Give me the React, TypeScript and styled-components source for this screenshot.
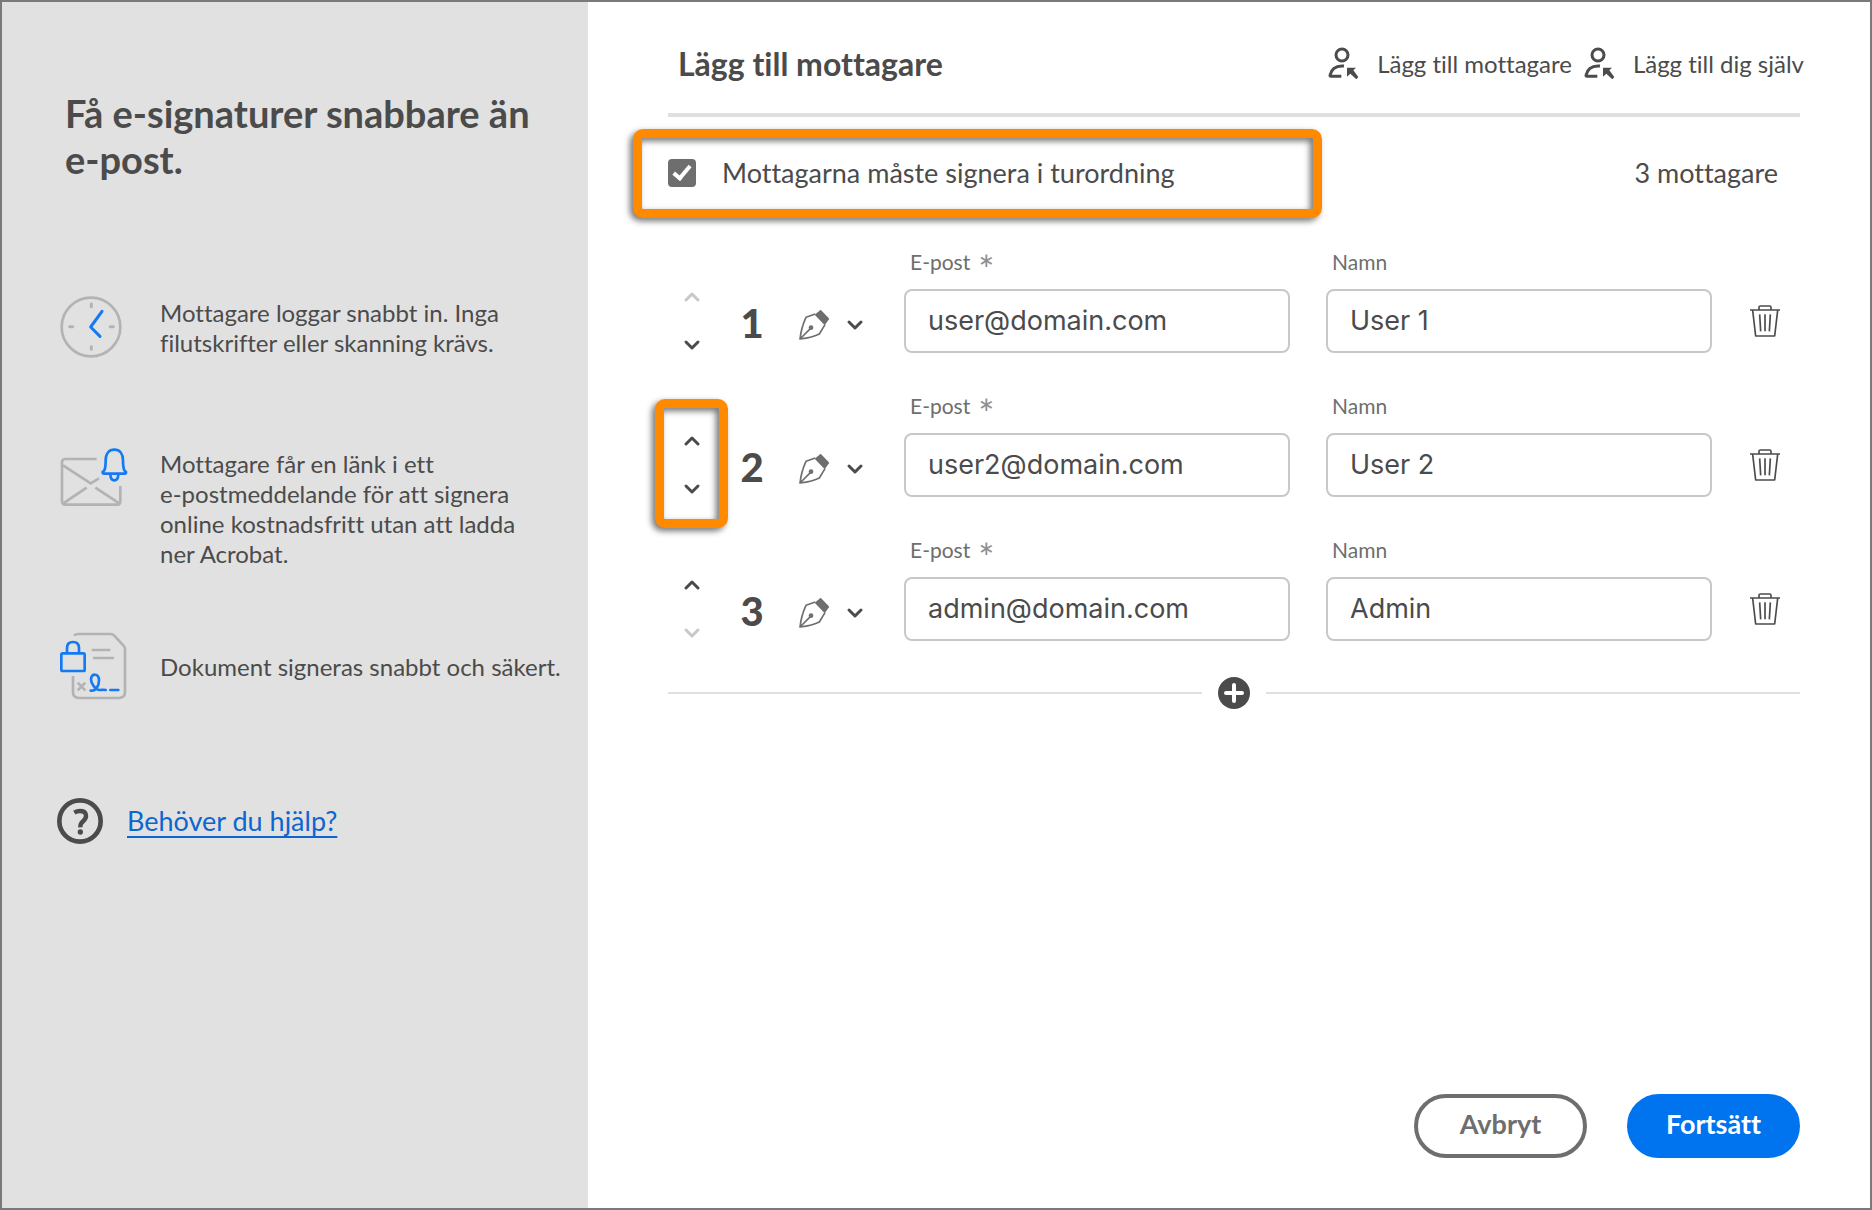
import React, { useState } from "react";
import styled, { createGlobalStyle, css } from "styled-components";

const color = {
  ink: "#4b4b4b",
  label: "#6e6e6e",
  line: "#e0e0e0",
  panel: "#e1e1e1",
  field: "#c8c8c8",
  blue: "#0073ef",
  link: "#0d66d0",
  icon: "#b3b3b3",
  accent: "#147af3",
  callout: "#ff8a00",
};

const GlobalStyle = createGlobalStyle`
  *, *::before, *::after { box-sizing: border-box; }
  body {
    margin: 0;
    background: #fff;
    color: ${color.ink};
    font-family: Lato, "Open Sans", sans-serif;
    font-size: 24px;
    line-height: 30px;
    font-variant-ligatures: none;
  }
  button, input { font: inherit; color: inherit; font-variant-ligatures: none; }
  svg { display: block; flex: none; }
`;

const Page = styled.div`
  display: grid;
  grid-template-columns: 586px 1fr;
  min-height: 100vh;
  border: 2px solid #7b7a7a;
`;

const Sidebar = styled.aside`
  background: ${color.panel};
  padding: 88px 24px 48px 55px;
`;

const Promo = styled.h1`
  margin: 0 0 114px;
  padding-left: 8px;
  font-size: 38px;
  line-height: 46px;
  font-weight: 700;
`;

const Features = styled.ul`
  list-style: none;
  margin: 0;
  padding: 0 0 0 3px;
  display: flex;
  flex-direction: column;
  gap: 63px;
`;

const Feature = styled.li<{ $align: "start" | "center"; $minHeight: number }>`
  display: grid;
  grid-template-columns: 100px 1fr;
  align-items: ${(p) => p.$align};
  min-height: ${(p) => p.$minHeight}px;
  p { margin: 0; padding-top: 2px; white-space: pre-line; }
`;

const Help = styled.div`
  display: flex;
  align-items: center;
  gap: 24px;
  margin-top: 98px;
`;

const HelpLink = styled.a`
  color: ${color.link};
  font-size: 27px;
  text-decoration-thickness: 2px;
  text-underline-offset: 5px;
`;

const Main = styled.main`
  display: flex;
  flex-direction: column;
  padding: 0 70px 50px 80px;
`;

const Header = styled.header`
  display: flex;
  align-items: center;
  justify-content: space-between;
  height: 115px;
  padding: 12px 0 0 10px;
  border-bottom: 4px solid ${color.line};
`;

const Title = styled.h2`
  margin: 0;
  font-size: 32px;
  line-height: 40px;
  font-weight: 700;
`;

const Actions = styled.div`
  display: flex;
  align-items: center;
  gap: 12px;
  margin-right: -4px;
`;

const Action = styled.button`
  display: flex;
  align-items: center;
  gap: 18px;
  padding: 0;
  border: 0;
  background: none;
  white-space: nowrap;
  cursor: pointer;
`;

const OrderBar = styled.div`
  display: flex;
  align-items: center;
  justify-content: space-between;
  height: 112px;
  margin-bottom: 19px;
  padding-right: 22px;
  font-size: 27px;
`;

const Highlight = styled.div<{ $inset: string }>`
  position: relative;
  &::after {
    content: "";
    position: absolute;
    inset: ${(p) => p.$inset};
    border: 9px solid ${color.callout};
    border-radius: 10px;
    filter: drop-shadow(-3px 3px 3px rgba(0, 0, 0, 0.55));
    pointer-events: none;
  }
`;

const CheckLabel = styled.label`
  display: flex;
  align-items: center;
  gap: 26px;
  width: 620px;
`;

const Check = styled.input`
  appearance: none;
  display: grid;
  place-items: center;
  width: 28px;
  height: 28px;
  margin: 0;
  border: 3px solid ${color.label};
  border-radius: 4px;
  &:checked { background: ${color.label}; }
  &:checked::after {
    content: "";
    width: 10px;
    height: 18px;
    margin-bottom: 4px;
    border: solid #fff;
    border-width: 0 4px 4px 0;
    transform: rotate(40deg);
  }
`;

const Rows = styled.ol`
  list-style: none;
  margin: 0;
  padding: 0;
  display: flex;
  flex-direction: column;
  gap: 39px;
`;

const Row = styled.li`
  display: grid;
  grid-template-columns: 200px 1fr 1fr 34px;
  column-gap: 36px;
  align-items: end;
  padding-right: 18px;
`;

const Lead = styled.div`
  display: grid;
  grid-template-columns: 48px 72px 1fr;
  align-items: center;
  height: 64px;
`;

const arrowsCss = css`
  display: flex;
  flex-direction: column;
  align-items: center;
  justify-content: space-between;
  height: 64px;
`;

const Arrows = styled.div`
  ${arrowsCss}
`;

const MarkedArrows = styled(Highlight)`
  ${arrowsCss}
`;

const IconButton = styled.button`
  display: flex;
  align-items: center;
  justify-content: center;
  gap: 16px;
  padding: 0;
  border: 0;
  background: none;
  color: ${color.ink};
  cursor: pointer;
  &:disabled { color: ${color.field}; cursor: default; }
`;

const ArrowButton = styled(IconButton)`
  width: 32px;
  height: 16px;
`;

const RoleButton = styled(IconButton)`
  justify-content: flex-start;
  padding: 7px 0 0 10px;
`;

const TrashButton = styled(IconButton)`
  height: 64px;
`;

const Position = styled.span`
  padding-top: 4px;
  font-size: 40px;
  line-height: 48px;
  font-weight: 900;
  text-align: center;
`;

const Required = styled.span`
  font-size: 38px;
  line-height: 42px;
  color: #8e8e8e;
`;

const Field = styled.div`
  display: flex;
  flex-direction: column;
  gap: 13px;
  label {
    display: flex;
    align-items: flex-start;
    gap: 8px;
    height: 28px;
    padding-left: 6px;
    font-size: 21px;
    line-height: 28px;
    color: ${color.label};
  }
  input {
    width: 100%;
    height: 64px;
    padding: 0 22px 2px;
    border: 2px solid ${color.field};
    border-radius: 8px;
    background: #fff;
    font-family: Inter, Roboto, sans-serif;
    font-size: 27px;
    line-height: 36px;
  }
`;

const AddLine = styled.div`
  display: flex;
  align-items: center;
  gap: 16px;
  margin-top: 36px;
  &::before, &::after {
    content: "";
    flex: 1;
    height: 2px;
    background: ${color.line};
  }
`;

const Footer = styled.footer`
  display: flex;
  justify-content: flex-end;
  gap: 40px;
  margin-top: auto;
`;

const Pill = styled.button<{ $primary?: boolean }>`
  width: 173px;
  height: 64px;
  padding: 0 0 4px;
  border: 4px solid ${(p) => (p.$primary ? color.blue : color.label)};
  border-radius: 32px;
  background: ${(p) => (p.$primary ? color.blue : "#fff")};
  color: ${(p) => (p.$primary ? "#fff" : color.label)};
  font-size: 27px;
  font-weight: 700;
  cursor: pointer;
`;

const ClockIcon = () => (
  <svg width="62" height="62" viewBox="61 46 186 186" fill="none" strokeLinecap="round" aria-hidden="true">
    <circle cx="154" cy="139" r="88" stroke={color.icon} strokeWidth="8" />
    <path d="M155 70v8M155 198v8M90 138h9M212 138h9" stroke={color.icon} strokeWidth="9" />
    <path d="M187 92l-34 47 28 28" stroke={color.accent} strokeWidth="9" strokeLinejoin="round" />
  </svg>
);

const MailIcon = () => (
  <svg width="68" height="60" viewBox="60 498 204 180" fill="none" strokeWidth="8" strokeLinejoin="round" aria-hidden="true">
    <path
      d="M170 534H76q-10 0-10 10v117q0 10 10 10h156q9 0 9-10v-46M69 553l83 54 25-15M70 667l70-47M166 620l72 47"
      stroke={color.icon}
    />
    <path
      d="M193 568q4-8 4-30c0-20 10-32 26-32s26 12 26 32q0 22 4 30l5 5q1 5-4 5h-62q-5 0-4-5zM211 581q1 17 12 17t12-17"
      stroke={color.accent}
    />
  </svg>
);

const DocumentIcon = () => (
  <svg width="68" height="68" viewBox="57 36 204 204" fill="none" strokeWidth="8" strokeLinejoin="round" aria-hidden="true">
    <path
      d="M99 47q5-5 14-5h96q6 0 10 4l28 30q5 5 5 12v128q0 18-18 18H114q-18 0-18-18v-48M152 90h56M156 114h63"
      stroke={color.icon}
    />
    <path d="M110 188l23 23M133 188l-23 23" stroke={color.icon} />
    <g stroke={color.accent} strokeLinecap="round">
      <rect x="61" y="100" width="70" height="53" rx="4" />
      <path d="M78 99V84q0-18 18-18t18 18v15" />
      <path d="M149 212c16 2 25-15 25-31 0-22-24-22-24-3 0 14 14 32 26 32 8 0 12-2 18 0M208 210h24" />
    </g>
  </svg>
);

const HelpIcon = () => (
  <svg width="46" height="46" viewBox="51 536 138 138" fill="none" stroke={color.ink} aria-hidden="true">
    <circle cx="120" cy="605" r="62" strokeWidth="14" />
    <path d="M103 580q8-5 17-5c22 0 22 20 10 30q-10 8-9 19" strokeWidth="13" />
    <circle cx="121" cy="638" r="8" fill={color.ink} stroke="none" />
  </svg>
);

const PersonIcon = () => (
  <svg width="31" height="34" viewBox="48 48 93 102" fill="none" stroke={color.ink} strokeWidth="9" aria-hidden="true">
    <circle cx="90" cy="72" r="18" />
    <path d="M96 105C72 103 58 114 54 133q0 3 3 3h31" />
    <path d="M105 110h27l-8 8 15 20-6 7-18-17-10 9z" fill={color.ink} stroke="none" />
  </svg>
);

const Chevron = ({ up }: { up?: boolean }) => (
  <svg width="18" height="12" viewBox="0 0 18 12" fill="none" stroke="currentColor" strokeWidth="3" strokeLinecap="round" strokeLinejoin="round" aria-hidden="true">
    <path d={up ? "M3 9l6-6 6 6" : "M3 3l6 6 6-6"} />
  </svg>
);

const PenIcon = () => (
  <svg width="32" height="32" viewBox="444 56 96 96" fill="none" stroke={color.label} strokeWidth="5" strokeLinejoin="round" aria-hidden="true">
    <path d="M496 71l-28 10c-8 17-15 38-18 65 24-3 43-7 58-15l17-28M450 146l31-31" />
    <circle cx="483" cy="112" r="7" fill={color.label} stroke="none" />
    <path d="M512 58l26 27-14 20-30-32z" fill={color.label} stroke="none" />
  </svg>
);

const TrashIcon = () => (
  <svg width="32" height="34" viewBox="1317 822 96 102" fill="none" stroke={color.ink} strokeWidth="5" strokeLinejoin="round" aria-hidden="true">
    <path d="M1320 840h90M1347 839v-7q0-4 4-4h28q4 0 4 4v7M1328 841l9 77h57l9-77" />
    <path d="M1349 853l3 51M1365 853v51M1381 853l-3 51" />
  </svg>
);

const PlusIcon = () => (
  <svg width="32" height="32" viewBox="0 0 32 32" aria-hidden="true">
    <circle cx="16" cy="16" r="16" fill={color.ink} />
    <path d="M16 8v16M8 16h16" stroke="#fff" strokeWidth="4" strokeLinecap="round" />
  </svg>
);

const initialRecipients = [
  { email: "user@domain.com", name: "User 1" },
  { email: "user2@domain.com", name: "User 2" },
  { email: "admin@domain.com", name: "Admin" },
];

export default function App() {
  const [recipients, setRecipients] = useState(initialRecipients);
  const [ordered, setOrdered] = useState(true);

  const swap = (a: number, b: number) => {
    const next = [...recipients];
    [next[a], next[b]] = [next[b], next[a]];
    setRecipients(next);
  };
  const edit = (index: number, key: "email" | "name", value: string) =>
    setRecipients(recipients.map((r, i) => (i === index ? { ...r, [key]: value } : r)));
  const remove = (index: number) => setRecipients(recipients.filter((_, i) => i !== index));
  const add = () => setRecipients([...recipients, { email: "", name: "" }]);

  const last = recipients.length - 1;

  return (
    <>
      <GlobalStyle />
      <Page>
        <Sidebar>
          <Promo>
            Få e-signaturer snabbare än
            <br />
            e-post.
          </Promo>
          <Features>
            <Feature $align="start" $minHeight={88}>
              <ClockIcon />
              <p>{"Mottagare loggar snabbt in. Inga\nfilutskrifter eller skanning krävs."}</p>
            </Feature>
            <Feature $align="start" $minHeight={88}>
              <MailIcon />
              <p>{"Mottagare får en länk i ett\ne-postmeddelande för att signera\nonline kostnadsfritt utan att ladda\nner Acrobat."}</p>
            </Feature>
            <Feature $align="center" $minHeight={68}>
              <DocumentIcon />
              <p>Dokument signeras snabbt och säkert.</p>
            </Feature>
          </Features>
          <Help>
            <HelpIcon />
            <HelpLink href="#help">Behöver du hjälp?</HelpLink>
          </Help>
        </Sidebar>

        <Main>
          <Header>
            <Title>Lägg till mottagare</Title>
            <Actions>
              <Action type="button" onClick={add}>
                <PersonIcon />
                Lägg till mottagare
              </Action>
              <Action type="button" onClick={add}>
                <PersonIcon />
                Lägg till dig själv
              </Action>
            </Actions>
          </Header>

          <OrderBar>
            <Highlight $inset="-29px -34px -30px -35px">
              <CheckLabel>
                <Check type="checkbox" checked={ordered} onChange={(e) => setOrdered(e.target.checked)} />
                Mottagarna måste signera i turordning
              </CheckLabel>
            </Highlight>
            <span>{recipients.length} mottagare</span>
          </OrderBar>

          <Rows>
            {recipients.map((recipient, i) => {
              const arrows = (
                <>
                  <ArrowButton type="button" aria-label="Flytta upp" disabled={i === 0} onClick={() => swap(i, i - 1)}>
                    <Chevron up />
                  </ArrowButton>
                  <ArrowButton type="button" aria-label="Flytta ned" disabled={i === last} onClick={() => swap(i, i + 1)}>
                    <Chevron />
                  </ArrowButton>
                </>
              );
              return (
                <Row key={i}>
                  <Lead>
                    {i === 1 ? (
                      <MarkedArrows $inset="-34px -12px -31px -13px">{arrows}</MarkedArrows>
                    ) : (
                      <Arrows>{arrows}</Arrows>
                    )}
                    <Position>{i + 1}</Position>
                    <RoleButton type="button" aria-label="Välj roll">
                      <PenIcon />
                      <Chevron />
                    </RoleButton>
                  </Lead>
                  <Field>
                    <label htmlFor={`email-${i}`}>
                      E-post <Required>*</Required>
                    </label>
                    <input
                      id={`email-${i}`}
                      type="email"
                      value={recipient.email}
                      onChange={(e) => edit(i, "email", e.target.value)}
                    />
                  </Field>
                  <Field>
                    <label htmlFor={`name-${i}`}>Namn</label>
                    <input
                      id={`name-${i}`}
                      type="text"
                      value={recipient.name}
                      onChange={(e) => edit(i, "name", e.target.value)}
                    />
                  </Field>
                  <TrashButton type="button" aria-label="Ta bort mottagare" onClick={() => remove(i)}>
                    <TrashIcon />
                  </TrashButton>
                </Row>
              );
            })}
          </Rows>

          <AddLine>
            <IconButton type="button" aria-label="Lägg till rad" onClick={add}>
              <PlusIcon />
            </IconButton>
          </AddLine>

          <Footer>
            <Pill type="button">Avbryt</Pill>
            <Pill type="button" $primary>
              Fortsätt
            </Pill>
          </Footer>
        </Main>
      </Page>
    </>
  );
}
